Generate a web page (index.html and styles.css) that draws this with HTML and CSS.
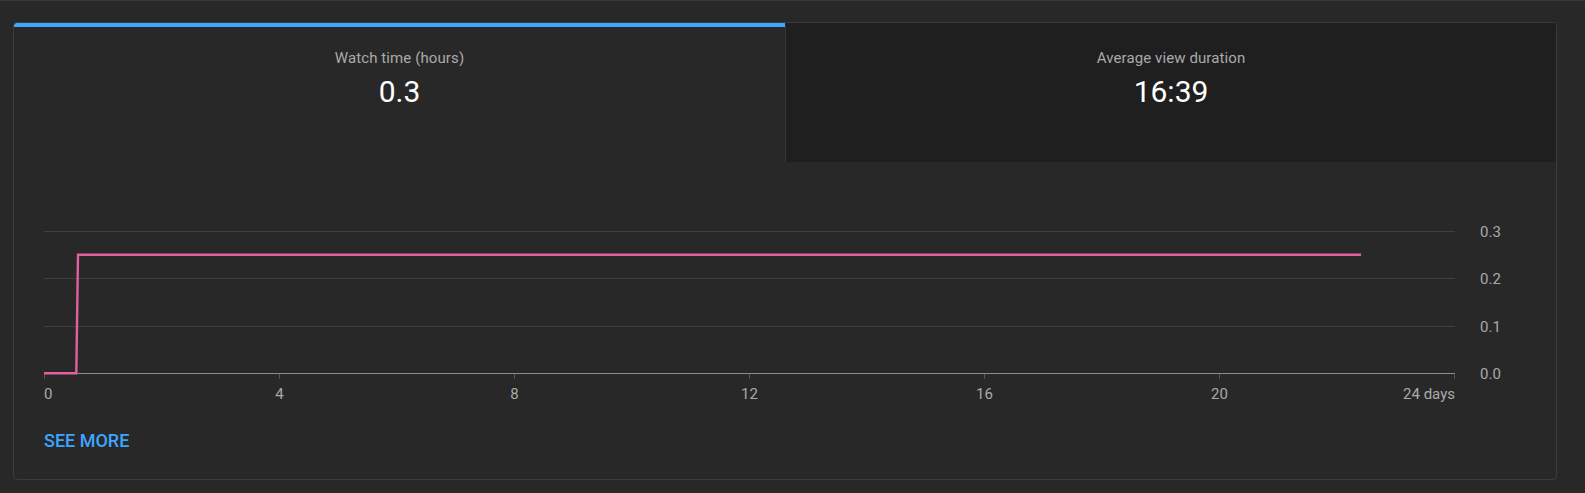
FILE: index.html
```html
<!DOCTYPE html>
<html lang="en">
<head>
<meta charset="utf-8">
<title>Analytics</title>
<link rel="stylesheet" href="styles.css">
</head>
<body>
<div class="page">
  <section class="card">
    <div class="tabs">
      <div class="tab tab-active">
        <div class="tab-label">Watch time (hours)</div>
        <div class="tab-value">0.3</div>
      </div>
      <div class="tab tab-inactive">
        <div class="tab-label">Average view duration</div>
        <div class="tab-value">16:39</div>
      </div>
    </div>
    <div class="chart">
      <svg class="chart-svg" width="1470" height="182" viewBox="0 0 1470 182">
        <g class="grid">
          <line x1="0" y1="10.5" x2="1411" y2="10.5"/>
          <line x1="0" y1="57.5" x2="1411" y2="57.5"/>
          <line x1="0" y1="105.5" x2="1411" y2="105.5"/>
        </g>
        <g class="ticks">
          <line x1="0.5" y1="152" x2="0.5" y2="158"/>
          <line x1="235.5" y1="152" x2="235.5" y2="158"/>
          <line x1="470.5" y1="152" x2="470.5" y2="158"/>
          <line x1="705.5" y1="152" x2="705.5" y2="158"/>
          <line x1="940.5" y1="152" x2="940.5" y2="158"/>
          <line x1="1175.5" y1="152" x2="1175.5" y2="158"/>
          <line x1="1410.5" y1="152" x2="1410.5" y2="158"/>
        </g>
        <line class="baseline" x1="0" y1="152.5" x2="1411" y2="152.5"/>
        <path class="series" d="M0 152.3 L32.3 152.3 L34 33.8 L1317 33.8"/>
        <g class="ylabels">
          <text x="1436" y="15.5">0.3</text>
          <text x="1436" y="62.5">0.2</text>
          <text x="1436" y="110.5">0.1</text>
          <text x="1436" y="157.5">0.0</text>
        </g>
        <g class="xlabels">
          <text x="0" y="178" text-anchor="start">0</text>
          <text x="235.5" y="178" text-anchor="middle">4</text>
          <text x="470.5" y="178" text-anchor="middle">8</text>
          <text x="705.5" y="178" text-anchor="middle">12</text>
          <text x="940.5" y="178" text-anchor="middle">16</text>
          <text x="1175.5" y="178" text-anchor="middle">20</text>
          <text x="1411" y="178" text-anchor="end">24 days</text>
        </g>
      </svg>
    </div>
    <div class="card-footer">
      <a class="see-more" href="#">SEE MORE</a>
    </div>
  </section>
</div>
</body>
</html>
```
FILE: styles.css
```css
* {
  box-sizing: border-box;
}

html, body {
  margin: 0;
  padding: 0;
  background: #282828;
}

body {
  font-family: Roboto, "Noto Sans", "Liberation Sans", sans-serif;
  color: #fff;
  border-top: 1px solid #383838;
  height: 493px;
  overflow: hidden;
}

.page {
  padding: 21px 28px 0 13px;
}

.card {
  width: 1544px;
  height: 458px;
  border: 1px solid #3c3c3c;
  border-radius: 4px;
  background: #282828;
  overflow: hidden;
  display: flex;
  flex-direction: column;
}

.tabs {
  display: grid;
  grid-template-columns: 771px 771px;
  height: 139px;
}

.tab {
  display: flex;
  flex-direction: column;
  align-items: center;
  padding-top: 21px;
  border-top: 4px solid transparent;
}

.tab-active {
  border-top-color: #3ea6ff;
  border-top-left-radius: 2px;
  background: #282828;
}

.tab-inactive {
  background: #1f1f1f;
  border-top-color: #1f1f1f;
  border-left: 1px solid #363636;
}

.tab-label {
  font-size: 15px;
  line-height: 20px;
  color: #aaaaaa;
  letter-spacing: 0.1px;
}

.tab-value {
  margin-top: 7px;
  font-size: 30px;
  line-height: 34px;
  color: #ffffff;
}

.chart {
  padding: 59px 0 0 30px;
}

.chart-svg {
  display: block;
  overflow: visible;
}

.grid line {
  stroke: #3f3f3f;
  stroke-width: 1;
}

.ticks line {
  stroke: #555555;
  stroke-width: 1;
}

.baseline {
  stroke: #8c8c8c;
  stroke-width: 1;
}

.series {
  fill: none;
  stroke: #e0619f;
  stroke-width: 2.4;
  stroke-linejoin: miter;
}

.ylabels text,
.xlabels text {
  font-family: Roboto, "Noto Sans", "Liberation Sans", sans-serif;
  font-size: 15px;
  fill: #aaaaaa;
}

.card-footer {
  padding: 26px 0 0 30px;
}

.see-more {
  font-size: 18px;
  line-height: 24px;
  font-weight: 500;
  color: #3ea6ff;
  text-decoration: none;
  display: inline-block;
}
```
